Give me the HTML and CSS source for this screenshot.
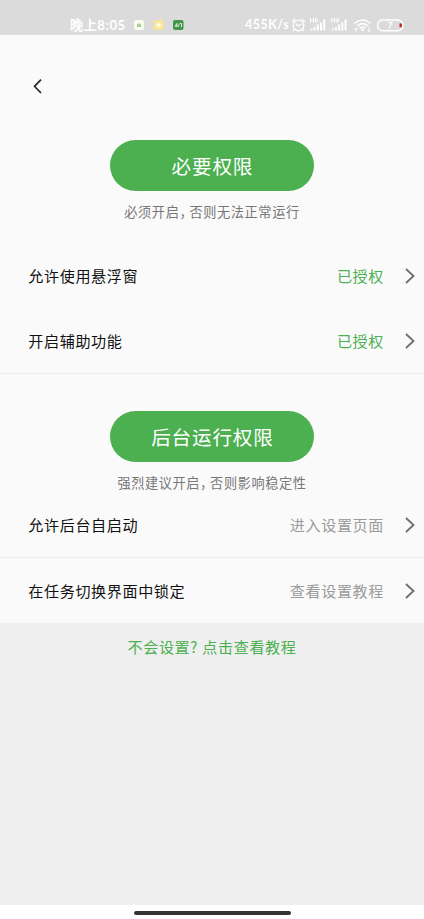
FILE: index.html
```html
<!DOCTYPE html>
<html lang="zh-CN">
<head>
<meta charset="utf-8">
<title>权限设置</title>
<link rel="stylesheet" href="styles.css">
</head>
<body>
<div class="screen">
  <header class="status">
    <span class="clock">晚上8:05</span>
    <svg class="apps" width="52" height="12" viewBox="0 0 52 12">
      <rect x="1" y="1" width="10" height="10" rx="2.500" fill="#fbfbf0"/><path d="M4 8V5.500L6 4l2 1.500V8z" fill="#a5cf93"/>
      <rect x="20.500" y="1" width="10.500" height="10" rx="2.500" fill="#f8e39b"/><circle cx="25.800" cy="6" r="2.500" fill="#fff9dc"/>
      <rect x="40" y="1" width="10.500" height="10" rx="2" fill="#43954a"/><path d="M42 7.500l1.800-3v3.500M42 7h2.500M45.300 8l1-3.500M47 4.500h1.500V8" fill="none" stroke="#e4f3e4" stroke-width=".9"/>
    </svg>
    <span class="speed">455K/s</span>
    <svg class="signals" width="116" height="18" viewBox="0 0 116 18" fill="none" stroke="#fff" stroke-width="1.300">
      <circle cx="8.500" cy="9.500" r="5.300"/><path d="M6 8l2.500 2 3-2M2.200 5.700l3-2.700M11.800 3l3 2.700M4.500 13.500L3.200 15M12.500 13.500l1.300 1.500"/>
      <g id="bars"><path d="M20.500 2v4.500M23.500 2v4.500M20.500 4.200h3M25.500 2.500v3.500h1q2.200-1.750 0-3.500z" stroke-width="1"/><path d="M21.500 14.500v-2M24.600 14.500v-3.500M27.800 14.500V8.500M31 14.500V6.500M34.200 14.500V3.500" stroke-width="2"/></g>
      <use href="#bars" x="21.300"/>
      <path d="M64.500 7.500q8-7 16 0M67 10q5.500-4.600 11 0M69.500 12.200q3-2.400 6 0" stroke-width="1.600"/><circle cx="72.500" cy="13.600" r="1.400" fill="#fff" stroke="none"/><path d="M66 12v3.500M64.700 13.300L66 12l1.300 1.300M79 11.500v4M77.700 14.200l1.300 1.300 1.300-1.300" stroke-width="1"/>
      <rect x="87.500" y="4" width="25.500" height="10.700" rx="5.200" stroke-width="1.500"/><path d="M97.500 6.500h4.300L99 12.600" stroke-width="1.200"/><rect x="109.500" y="7.500" width="2.400" height="3.700" fill="#b9272c" stroke="none"/>
    </svg>
  </header>

  <main class="page">
    <nav class="topbar">
      <svg width="12" height="18" viewBox="0 0 12 18"><path d="M10 2.600L3.500 9.300 10 16" fill="none" stroke="#292929" stroke-width="1.700"/></svg>
    </nav>

    <section class="group required">
      <button class="pill">必要权限</button>
      <p class="hint">必须开启<span class="comma">，</span>否则无法正常运行</p>
      <div class="row">
        <span class="label">允许使用悬浮窗</span><span class="state granted">已授权</span>
        <svg class="chevron" viewBox="0 0 12 18"><path d="M2 2l7.500 7L2 16"/></svg>
      </div>
      <div class="row">
        <span class="label">开启辅助功能</span><span class="state granted">已授权</span>
        <svg class="chevron" viewBox="0 0 12 18"><path d="M2 2l7.500 7L2 16"/></svg>
      </div>
    </section>

    <section class="group background">
      <button class="pill">后台运行权限</button>
      <p class="hint">强烈建议开启<span class="comma">，</span>否则影响稳定性</p>
      <div class="row">
        <span class="label">允许后台自启动</span><span class="state">进入设置页面</span>
        <svg class="chevron" viewBox="0 0 12 18"><path d="M2 2l7.500 7L2 16"/></svg>
      </div>
      <div class="row last">
        <span class="label">在任务切换界面中锁定</span><span class="state">查看设置教程</span>
        <svg class="chevron" viewBox="0 0 12 18"><path d="M2 2l7.500 7L2 16"/></svg>
      </div>
    </section>
  </main>

  <a class="help">不会设置<span class="mark">?</span>点击查看教程</a>
  <footer class="gesture"><div class="handle"></div></footer>
</div>
</body>
</html>
```
FILE: styles.css
```css
* { box-sizing: border-box; }

body {
  margin: 0;
  font-family: "Noto Sans CJK SC", sans-serif;
}

.screen {
  width: 424px;
  height: 919px;
  display: flex;
  flex-direction: column;
  overflow: hidden;
  background: #efefef;
}

.status {
  height: 35px;
  flex: none;
  display: flex;
  align-items: center;
  padding: 14px 0 0 70px;
  background: #dbdbdb;
  color: #fff;
  white-space: nowrap;
}

.clock {
  width: 63px;
  font: 700 13.2px/18px Lato, "Noto Sans CJK SC", sans-serif;
  letter-spacing: 0.5px;
}

.apps { flex: none; }

.speed {
  width: 45px;
  margin-left: 60px;
  font: 700 12.5px/18px Lato, sans-serif;
  letter-spacing: 0.5px;
}

.signals { flex: none; }

.page {
  height: 588px;
  flex: none;
  background: #fafafa;
}

.topbar {
  height: 105px;
  padding: 42px 0 0 31px;
}

.topbar svg { display: block; }

.group {
  display: flex;
  flex-direction: column;
  align-items: center;
}

.required {
  height: 234px;
  border-bottom: 1px solid #ececec;
}

.background { padding-top: 37px; }

.pill {
  width: 204px;
  height: 51px;
  flex: none;
  padding: 1px 0 0;
  border: 0;
  border-radius: 26px;
  background: #4caf50;
  color: #fff;
  font: 400 19.6px/50px "Noto Sans CJK SC", sans-serif;
  letter-spacing: 0.8px;
  text-indent: 0.8px;
}

.hint {
  height: 20px;
  flex: none;
  margin: 11px 0 0;
  color: #777;
  font-size: 13.2px;
  line-height: 20px;
  letter-spacing: 0.6px;
  white-space: nowrap;
}

.comma {
  font-feature-settings: "halt";
  padding-right: 2.8px;
}

.row {
  width: 100%;
  height: 65px;
  flex: none;
  display: flex;
  align-items: center;
  padding: 0 8px 0 28.3px;
  font-size: 15.1px;
  line-height: 24px;
  letter-spacing: 0.6px;
}

.required .hint { margin-bottom: 21px; }

.background .row {
  height: 65px;
  border-bottom: 1px solid #ececec;
}

.background .last { height: 66px; border-bottom: 0; }

.label,
.state { padding-bottom: 2px; }

.label { color: #111; }

.state {
  margin-left: auto;
  color: #9b9b9b;
}

.granted { color: #4caf50; }

.chevron {
  width: 12px;
  height: 18px;
  margin-left: 20px;
  fill: none;
  stroke: #6d6d6d;
  stroke-width: 1.800;
}

.help {
  flex: 1;
  padding-top: 11px;
  color: #4caf50;
  font-size: 15.1px;
  line-height: 24px;
  letter-spacing: 0.6px;
  text-align: center;
}

.mark {
  display: inline-block;
  width: 12px;
  text-align: left;
}

.gesture {
  height: 14px;
  flex: none;
  padding-top: 6px;
  background: #fff;
}

.handle {
  width: 157px;
  height: 4px;
  margin: 0 auto;
  border-radius: 2px;
  background: #333;
}
```
